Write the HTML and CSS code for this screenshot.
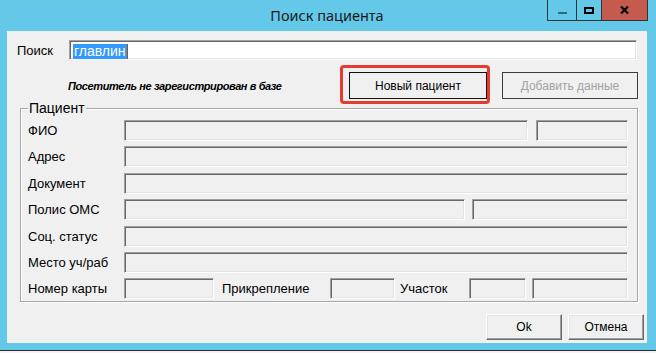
FILE: index.html
```html
<!DOCTYPE html>
<html lang="ru">
<head>
    <meta charset="UTF-8">
    <meta name="viewport" content="width=device-width, initial-scale=1.0">
    <link rel="stylesheet" href="styles.css">
    <title>Поиск пациента</title>
</head>
<body>
    <div class="window">
        <div class="titlebar">
            <span class="title">Поиск пациента</span>
            <div class="controls">
                <span class="ctl ctl-min"><i></i></span>
                <span class="ctl ctl-max"><i></i></span>
                <span class="ctl ctl-close">
                    <svg width="9" height="8" viewBox="0 0 9 8"><path d="M1 0.5 L8 7.5 M8 0.5 L1 7.5" stroke="#000" stroke-width="2.2"/></svg>
                </span>
            </div>
        </div>

        <div class="client">
            <div class="search-row">
                <label class="lbl" for="search">Поиск</label>
                <div class="textbox" id="search"><span class="sel">главлин</span></div>
            </div>

            <div class="action-row">
                <p class="notice">Посетитель не зарегистрирован в базе</p>
                <div class="btn-wrap">
                    <button class="btn btn-flat">Новый пациент</button>
                    <span class="callout"></span>
                </div>
                <button class="btn btn-flat btn-off" disabled>Добавить данные</button>
            </div>

            <div class="group">
                <span class="group-title">Пациент</span>
                <div class="row">
                    <span class="lbl col-lbl">ФИО</span>
                    <span class="field grow"></span>
                    <span class="field fio2"></span>
                </div>
                <div class="row">
                    <span class="lbl col-lbl">Адрес</span>
                    <span class="field grow"></span>
                </div>
                <div class="row">
                    <span class="lbl col-lbl">Документ</span>
                    <span class="field grow"></span>
                </div>
                <div class="row">
                    <span class="lbl col-lbl">Полис ОМС</span>
                    <span class="field grow"></span>
                    <span class="field polis2"></span>
                </div>
                <div class="row">
                    <span class="lbl col-lbl">Соц. статус</span>
                    <span class="field grow"></span>
                </div>
                <div class="row">
                    <span class="lbl col-lbl">Место уч/раб</span>
                    <span class="field grow"></span>
                </div>
                <div class="row row-card">
                    <span class="lbl col-lbl">Номер карты</span>
                    <span class="field card-no"></span>
                    <span class="lbl lbl-attach">Прикрепление</span>
                    <span class="field attach"></span>
                    <span class="lbl lbl-area">Участок</span>
                    <span class="field area"></span>
                    <span class="field grow"></span>
                </div>
            </div>

            <div class="dialog-buttons">
                <button class="btn btn-raised">Ok</button>
                <button class="btn btn-raised">Отмена</button>
            </div>
        </div>
    </div>
</body>
</html>
```

FILE: styles.css
```css
body {
  margin: 0;
  background: #f4f4f4;
  font-family: "Liberation Sans", Arial, sans-serif;
}

.window {
  width: 647px;
  height: 350px;
  background: #64c8e8;
  border-bottom: 1px solid #2b2b2b;
  padding: 0 9px 0 0;
}

/* title bar */
.titlebar {
  height: 31px;
  display: grid;
  grid-template-columns: 1fr auto 1fr;
}
.title {
  grid-column: 2;
  font-family: "Noto Sans", "Open Sans", sans-serif;
  font-size: 14.5px;
  color: #1a1a1a;
  line-height: 30px;
  padding-left: 7px;
}
.controls {
  grid-column: 3;
  justify-self: end;
  display: flex;
  height: 21px;
  margin-right: -1px;
}
.ctl {
  display: flex;
  align-items: center;
  justify-content: center;
  height: 20px;
  border: 1px solid #333;
  border-top: none;
  border-right: none;
}
.ctl-min { width: 28px; }
.ctl-max { width: 24px; }
.ctl-close {
  width: 45px;
  background: #c55b4f;
  border-right: 1px solid #333;
}
.ctl-min i {
  width: 9px;
  height: 2px;
  margin-top: 6px;
  background: #2d6b80;
}
.ctl-max i {
  width: 6px;
  height: 3px;
  border: 2px solid #000;
}

/* client area */
.client {
  margin-left: 7px;
  height: 312px;
  background: #f0f0f0;
  position: relative;
  box-sizing: border-box;
  padding-top: 9px;
}

.lbl {
  font-size: 13px;
  color: #000;
}

.search-row {
  display: flex;
  align-items: center;
  height: 20px;
}
.search-row .lbl {
  width: 52px;
  padding-left: 10px;
}
.textbox {
  box-sizing: border-box;
  width: 568px;
  height: 20px;
  background: #fff;
  border-top: 1px solid #a0a0a0;
  border-left: 1px solid #a0a0a0;
  border-right: 1px solid #fff;
  border-bottom: 1px solid #fff;
  box-shadow: inset 1px 1px 0 #696969, inset -1px -1px 0 #e3e3e3;
  padding: 1px 0 0 3px;
}
.sel {
  display: inline-block;
  background: #3399ff;
  color: #fff;
  font-size: 14px;
  line-height: 15px;
  height: 15px;
  padding: 0 1px 0 1px;
  border-right: 1px solid #a35200;
}

.action-row {
  display: flex;
  align-items: center;
  margin-top: 12px;
  height: 27px;
}
.notice {
  margin: 0;
  width: 281px;
  padding-left: 61px;
  font-size: 11px;
  font-weight: bold;
  font-style: italic;
  letter-spacing: -0.4px;
  color: #000;
}
.btn-wrap {
  position: relative;
  display: flex;
}
.callout {
  position: absolute;
  top: -7px;
  left: -9px;
  right: -3px;
  bottom: -5px;
  border: 3px solid #e63b2f;
  border-radius: 4px;
}

.btn {
  font-family: "Liberation Sans", Arial, sans-serif;
  font-size: 12px;
  color: #000;
  background: #f0f0f0;
  padding: 0;
  margin: 0;
}
.btn-flat {
  height: 27px;
  width: 138px;
  border: 1px solid #111;
}
.btn-off {
  width: 136px;
  margin-left: 15px;
  border-color: #3c3c3c;
  color: #a3a3a3;
}

/* patient group */
.group {
  position: relative;
  margin: 9px 0 0 13px;
  width: 618px;
  box-sizing: border-box;
  border: 1px solid #a6a6a6;
  box-shadow: 1px 1px 0 #fff, inset 1px 1px 0 #fff;
  padding: 11px 9px 2px 7px;
  display: flex;
  flex-direction: column;
  gap: 5.4px;
}
.group-title {
  position: absolute;
  top: -9px;
  left: 7px;
  padding: 0 1px;
  background: #f0f0f0;
  font-size: 14px;
  line-height: 16px;
}

.row {
  display: flex;
  align-items: center;
  height: 21px;
}
.col-lbl {
  width: 96px;
  flex: none;
}
.field {
  box-sizing: border-box;
  height: 21px;
  background: #f0f0f0;
  border-top: 1px solid #a0a0a0;
  border-left: 1px solid #a0a0a0;
  border-right: 1px solid #fff;
  border-bottom: 1px solid #fff;
  box-shadow: inset 1px 1px 0 #696969, inset -1px -1px 0 #e3e3e3;
}
.grow { flex: 1; }
.fio2 { width: 92px; margin-left: 8px; }
.polis2 { width: 156px; margin-left: 7px; }

.card-no { width: 90px; flex: none; }
.lbl-attach { width: 108px; padding-left: 8px; flex: none; }
.attach { width: 65px; flex: none; }
.lbl-area { width: 69px; padding-left: 5px; flex: none; }
.area { width: 57px; flex: none; margin-right: 6px; }

/* dialog buttons */
.dialog-buttons {
  display: flex;
  justify-content: flex-end;
  gap: 6px;
  margin: 12px 3px 0 0;
}
.btn-raised {
  width: 76px;
  height: 26px;
  border: 1px solid;
  border-color: #fff #696969 #696969 #fff;
  box-shadow: inset -1px -1px 0 #a0a0a0, inset 1px 1px 0 #e3e3e3;
}
```
